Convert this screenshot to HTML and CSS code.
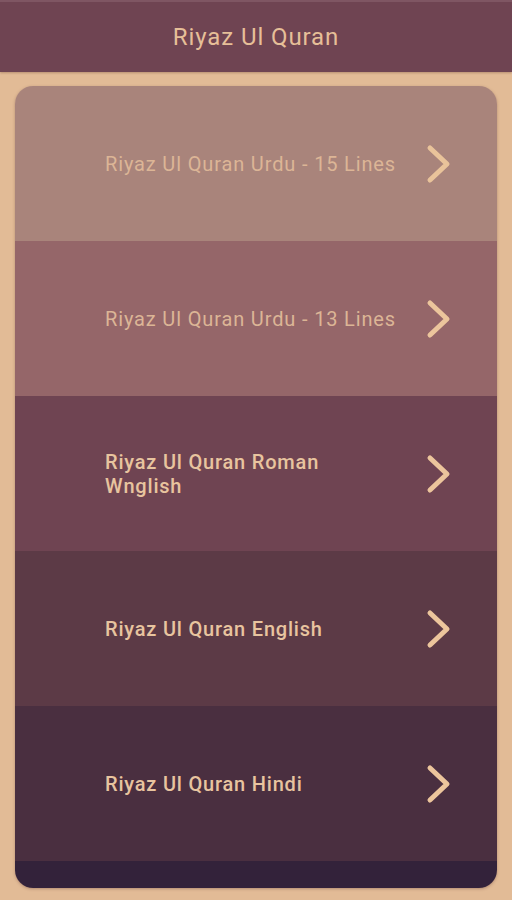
FILE: index.html
```html
<!DOCTYPE html>
<html>
<head>
<meta charset="utf-8">
<link rel="stylesheet" href="styles.css">
</head>
<body>
<header class="appbar"><h1 class="title">Riyaz Ul Quran</h1></header>
<main class="content">
  <div class="card">
    <a class="row row-1"><span class="label faded">Riyaz Ul Quran Urdu - 15 Lines</span><svg class="chev" viewBox="0 0 26 40"><path d="M4 4 L21 20 L4 36"/></svg></a>
    <a class="row row-2"><span class="label faded">Riyaz Ul Quran Urdu - 13 Lines</span><svg class="chev" viewBox="0 0 26 40"><path d="M4 4 L21 20 L4 36"/></svg></a>
    <a class="row row-3"><span class="label">Riyaz Ul Quran Roman Wnglish</span><svg class="chev" viewBox="0 0 26 40"><path d="M4 4 L21 20 L4 36"/></svg></a>
    <a class="row row-4"><span class="label">Riyaz Ul Quran English</span><svg class="chev" viewBox="0 0 26 40"><path d="M4 4 L21 20 L4 36"/></svg></a>
    <a class="row row-5"><span class="label">Riyaz Ul Quran Hindi</span><svg class="chev" viewBox="0 0 26 40"><path d="M4 4 L21 20 L4 36"/></svg></a>
    <div class="row-end"></div>
  </div>
</main>
</body>
</html>
```
FILE: styles.css
```css
* { box-sizing: border-box; }
html, body { margin: 0; padding: 0; }
body {
  width: 512px;
  height: 900px;
  background: #e2bb96;
  font-family: Roboto, "Noto Sans", sans-serif;
  overflow: hidden;
}
.appbar {
  height: 72px;
  background: #6f4452;
  border-top: 2px solid #7f5663;
  display: flex;
  align-items: center;
  justify-content: center;
  box-shadow: 0 1px 2px rgba(120, 80, 60, 0.4);
}
.title {
  margin: 0;
  font-size: 24px;
  font-weight: 400;
  color: #e6bf98;
  letter-spacing: 0.9px;
}
.content {
  padding: 14px 15px 0 15px;
}
.card {
  border-radius: 18px;
  overflow: hidden;
  display: flex;
  flex-direction: column;
  box-shadow: 0 1px 3px rgba(90, 50, 50, 0.35);
}
.row {
  height: 155px;
  display: flex;
  align-items: center;
  padding-left: 90px;
  padding-right: 45px;
  text-decoration: none;
}
.label {
  width: 293px;
  font-size: 20px;
  font-weight: 500;
  line-height: 24px;
  letter-spacing: 0.8px;
  color: #e8c49f;
}
.label.faded { color: #dcb596; font-weight: 400; letter-spacing: 0.85px; }
.row-1 { background: #a9847b; }
.row-2 { background: #956669; }
.row-3 { background: #6f4452; }
.row-4 { background: #5c3a46; }
.row-5 { background: #4a2f40; }
.row-end { height: 27px; background: #33223a; }
.chev {
  width: 26px;
  height: 40px;
  margin-left: auto;
  fill: none;
  stroke: #ecc59c;
  stroke-width: 5;
  stroke-linecap: round;
  stroke-linejoin: round;
}
.row-1 .chev { stroke: #e9c39a; }
```
